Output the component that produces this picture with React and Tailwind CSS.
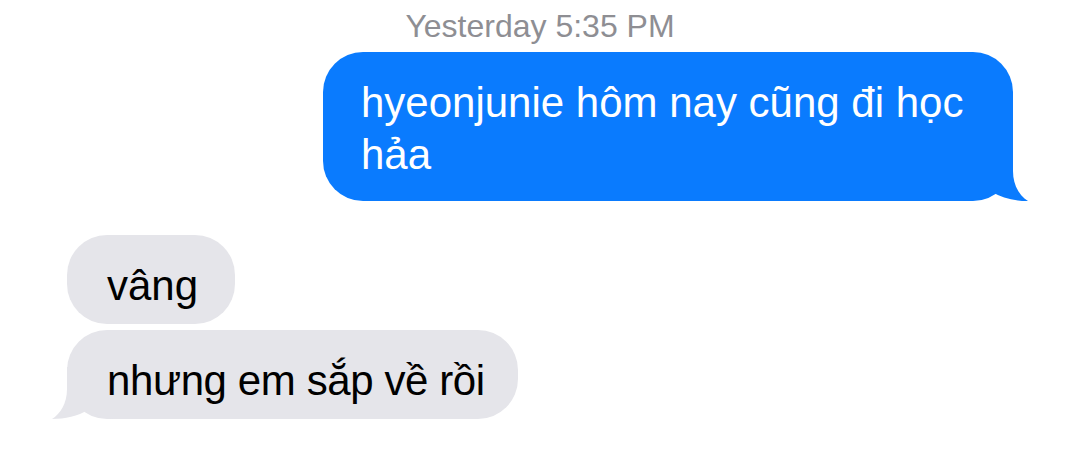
import React from "react";

function Tail({ color, className }) {
  return (
    <svg
      className={className}
      width="70"
      height="52"
      viewBox="0 0 70 52"
      aria-hidden="true"
    >
      <path
        d="M53 0 L53 22 C53 37 60 47 68 52 C55 52 42 49 32 43 C25 48 15 52 2 52 L0 52 L0 0 Z"
        fill={color}
      />
    </svg>
  );
}

export default function App() {
  const font = { fontFamily: '"Liberation Sans", Arial, sans-serif' };
  return (
    <div
      className="w-[1080px] h-[451px] bg-white overflow-hidden flex flex-col"
      style={font}
    >
      <div className="mt-[6px] h-[40px] leading-[40px] text-[32px] text-[#8e8e93] text-center">
        Yesterday 5:35 PM
      </div>

      <div className="mt-[6px] flex justify-end pr-[67px]">
        <div className="relative w-[690px] rounded-[40px] bg-[#0a7bfe] pl-[38px] pr-[30px] pt-[25px] pb-[20px] text-white text-[42px] leading-[52px]">
          <span className="relative z-10">hyeonjunie hôm nay cũng đi học hảa</span>
          <Tail color="#0a7bfe" className="absolute right-[-17px] bottom-0" />
        </div>
      </div>

      <div className="mt-[34px] flex flex-col items-start pl-[67px] gap-[6px]">
        <div className="w-[168px] rounded-[40px] bg-[#e5e5ea] pl-[40px] pt-[25px] pb-[12px] text-black text-[42px] leading-[52px] whitespace-nowrap">
          vâng
        </div>
        <div className="relative w-[451px] rounded-[40px] bg-[#e5e5ea] pl-[40px] pt-[25px] pb-[12px] text-black text-[42px] leading-[52px] tracking-[-0.4px] whitespace-nowrap">
          <span className="relative z-10">nhưng em sắp về rồi</span>
          <Tail color="#e5e5ea" className="absolute left-[-17px] bottom-0 -scale-x-100" />
        </div>
      </div>
    </div>
  );
}
